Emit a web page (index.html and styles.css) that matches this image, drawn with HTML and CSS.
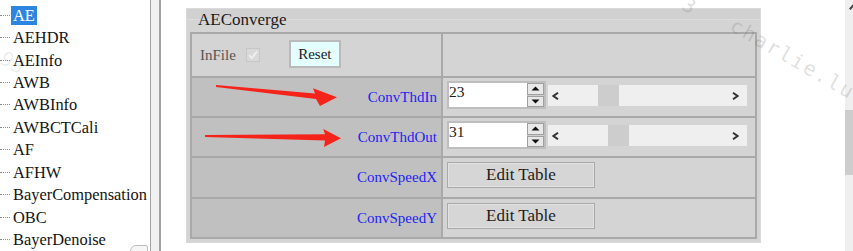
FILE: index.html
```html
<!DOCTYPE html>
<html>
<head>
<meta charset="utf-8">
<link rel="stylesheet" href="styles.css">
</head>
<body>
<div class="app">
  <aside class="tree">
    <ul class="tree-list">
      <li class="node"><span class="conn"></span><span class="label sel">AE</span></li>
      <li class="node"><span class="conn"></span><span class="label">AEHDR</span></li>
      <li class="node"><span class="conn"></span><span class="label">AEInfo</span></li>
      <li class="node"><span class="conn"></span><span class="label">AWB</span></li>
      <li class="node"><span class="conn"></span><span class="label">AWBInfo</span></li>
      <li class="node"><span class="conn"></span><span class="label">AWBCTCali</span></li>
      <li class="node"><span class="conn"></span><span class="label">AF</span></li>
      <li class="node"><span class="conn"></span><span class="label">AFHW</span></li>
      <li class="node"><span class="conn"></span><span class="label">BayerCompensation</span></li>
      <li class="node"><span class="conn"></span><span class="label">OBC</span></li>
      <li class="node"><span class="conn"></span><span class="label">BayerDenoise</span></li>
    </ul>
    <div class="hscroll-stub"></div>
  </aside>
  <div class="splitter"></div>
  <main class="content">
    <section class="group">
      <div class="group-title">AEConverge</div>
      <div class="grid">
        <div class="cell head-left">
          <span class="infile">InFile</span>
          <svg class="check" width="14" height="14" viewBox="0 0 14 14"><rect x="0.5" y="0.5" width="13" height="13" fill="#d9d9d9" stroke="#c6c6c6"/><path d="M3 7.2 L5.8 10 L11 3.5" fill="none" stroke="#f2f2f2" stroke-width="1.6"/></svg>
          <button class="reset-btn">Reset</button>
        </div>
        <div class="cell head-right"></div>

        <div class="cell lbl">ConvThdIn</div>
        <div class="cell ctl">
          <div class="spin">
            <span class="spin-value">23</span>
            <span class="spin-btns">
              <span class="spin-btn"><svg width="9" height="5" viewBox="0 0 9 5"><path d="M0.5 4.5 L4.5 0.5 L8.5 4.5Z" fill="#111"/></svg></span>
              <span class="spin-btn"><svg width="9" height="5" viewBox="0 0 9 5"><path d="M0.5 0.5 L4.5 4.5 L8.5 0.5Z" fill="#111"/></svg></span>
            </span>
          </div>
          <div class="slider">
            <span class="sl-arrow sl-left"><svg width="7" height="8" viewBox="0 0 7 8"><path d="M6 0.8 L1.5 4 L6 7.2" fill="none" stroke="#333" stroke-width="2"/></svg></span>
            <span class="track"><span class="thumb" style="margin-left:34px"></span></span>
            <span class="sl-arrow sl-right"><svg width="7" height="8" viewBox="0 0 7 8"><path d="M1 0.8 L5.5 4 L1 7.2" fill="none" stroke="#333" stroke-width="2"/></svg></span>
          </div>
        </div>

        <div class="cell lbl">ConvThdOut</div>
        <div class="cell ctl">
          <div class="spin">
            <span class="spin-value">31</span>
            <span class="spin-btns">
              <span class="spin-btn"><svg width="9" height="5" viewBox="0 0 9 5"><path d="M0.5 4.5 L4.5 0.5 L8.5 4.5Z" fill="#111"/></svg></span>
              <span class="spin-btn"><svg width="9" height="5" viewBox="0 0 9 5"><path d="M0.5 0.5 L4.5 4.5 L8.5 0.5Z" fill="#111"/></svg></span>
            </span>
          </div>
          <div class="slider">
            <span class="sl-arrow sl-left"><svg width="7" height="8" viewBox="0 0 7 8"><path d="M6 0.8 L1.5 4 L6 7.2" fill="none" stroke="#333" stroke-width="2"/></svg></span>
            <span class="track"><span class="thumb" style="margin-left:44px"></span></span>
            <span class="sl-arrow sl-right"><svg width="7" height="8" viewBox="0 0 7 8"><path d="M1 0.8 L5.5 4 L1 7.2" fill="none" stroke="#333" stroke-width="2"/></svg></span>
          </div>
        </div>

        <div class="cell lbl">ConvSpeedX</div>
        <div class="cell ctl"><button class="edit-btn">Edit Table</button></div>

        <div class="cell lbl">ConvSpeedY</div>
        <div class="cell ctl"><button class="edit-btn">Edit Table</button></div>
      </div>
    </section>
  </main>
  <div class="vscroll">
    <div class="vscroll-inner">
      <span class="vs-up"><svg width="9" height="6" viewBox="0 0 9 6"><path d="M0.8 5.2 L4.5 1.2 L8.2 5.2" fill="none" stroke="#444" stroke-width="2"/></svg></span>
      <span class="vs-thumb"></span>
    </div>
  </div>
</div>

<svg class="arrows" width="853" height="251" viewBox="0 0 853 251">
  <polygon points="216,85 315,93.5 313,88.3 337,97.3 320,106 316,99 216,87" fill="#f5241a"/>
  <polygon points="205,135 325,134.3 323.3,129 341,138.3 324,147 325,140.5 205,137" fill="#f5241a"/>
</svg>
<div class="watermark wm-main">charlie.lu</div>
<div class="watermark wm-top">3</div>
<div class="watermark wm-left">93</div>
</body>
</html>
```
FILE: styles.css
```css
html, body {
  margin: 0;
  padding: 0;
}
body {
  width: 853px;
  height: 251px;
  overflow: hidden;
  background: #fff;
  font-family: "Liberation Serif", "Times New Roman", serif;
  position: relative;
}
.app {
  display: flex;
  height: 251px;
}

/* ---------- tree ---------- */
.tree {
  width: 150px;
  flex: none;
  position: relative;
  padding-top: 4px;
  box-sizing: border-box;
}
.tree-list {
  list-style: none;
  margin: 0;
  padding: 0;
}
.node {
  display: flex;
  align-items: center;
  height: 22.45px;
  font-size: 16.4px;
  color: #141414;
  white-space: nowrap;
}
.conn {
  width: 10px;
  border-top: 1px dotted #8a8a8a;
  margin-right: 1px;
  flex: none;
}
.label {
  padding: 0 2px;
  line-height: 19px;
}
.label.sel {
  background: #2c85de;
  color: #fff;
}
.hscroll-stub {
  position: absolute;
  left: 130px;
  top: 245px;
  width: 16px;
  height: 10px;
  border: 1px solid #bdbdbd;
  border-radius: 6px 2px 0 0;
  background: #f6f6f6;
}

/* ---------- splitter ---------- */
.splitter {
  width: 8px;
  flex: none;
  border-left: 1px solid #a3a3a3;
  border-right: 2px solid #a3a3a3;
  background: #f1f1f1;
}

/* ---------- content ---------- */
.content {
  flex: 1;
  padding: 8px 0 0 25px;
}
.group {
  width: 575px;
  height: 235px;
  box-sizing: border-box;
  border: 1px solid #dadada;
  background: linear-gradient(#d1d1d1 0 10px, #dcdcdc 10px 11px, #d4d4d4 11px);
  padding: 0 3px 3px;
  display: flex;
  flex-direction: column;
}
.group-title {
  height: 23px;
  line-height: 21px;
  font-size: 17px;
  color: #1a1a1a;
  padding-left: 8px;
}
.grid {
  display: grid;
  grid-template-columns: 249px 312px;
  grid-template-rows: 42px 38px 38px 39px 38px;
  gap: 2px;
  padding: 2px;
  background: #a9a9a9;
  width: 567px;
  box-sizing: border-box;
}
.cell {
  background: #d4d4d4;
}
.head-left {
  display: flex;
  align-items: center;
  padding-left: 8px;
}
.infile {
  font-size: 15px;
  color: #555;
  margin-right: 10px;
}
.check {
  display: block;
  margin-top: -1px;
}
.reset-btn {
  margin-left: 29px;
  margin-top: -2px;
  width: 52px;
  height: 28px;
  box-sizing: border-box;
  border: 2px solid #bababa;
  background: #e4fefe;
  font-family: "Liberation Serif", "Times New Roman", serif;
  font-size: 15px;
  color: #1c1c1c;
  padding: 0;
}
.lbl {
  background: #c0c0c0;
  display: flex;
  align-items: center;
  justify-content: flex-end;
  padding-right: 4px;
  font-size: 15px;
  color: #2323f5;
}
.ctl {
  display: flex;
  align-items: flex-start;
  padding: 3px 0 0 4px;
}

/* spin box */
.spin {
  display: flex;
  width: 99px;
  height: 28px;
  box-sizing: border-box;
  border: 2px solid #bebebe;
  background: #fff;
}
.spin-value {
  flex: 1;
  font-size: 15.5px;
  line-height: 18px;
  color: #1a1a1a;
}
.spin-btns {
  width: 17px;
  display: flex;
  flex-direction: column;
  gap: 1px;
  background: #cfcfcf;
}
.spin-btn {
  flex: 1;
  display: flex;
  align-items: center;
  justify-content: center;
  border: 1px solid #9f9f9f;
  background: #e8e8e8;
}
.spin-btn svg {
  display: block;
}

/* slider */
.slider {
  display: flex;
  width: 199px;
  height: 21px;
  margin: 4px 0 0 2px;
  background: #efefef;
}
.sl-arrow {
  width: 16px;
  display: flex;
  align-items: center;
  flex: none;
  box-sizing: border-box;
}
.sl-left {
  padding-left: 4px;
}
.sl-right {
  padding-left: 1px;
}
.sl-arrow svg {
  display: block;
}
.track {
  flex: 1;
  display: flex;
  background: #efefef;
}
.thumb {
  flex: none;
  width: 21px;
  height: 21px;
  background: #cdcdcd;
}

/* edit buttons */
.ctl .edit-btn {
  width: 148px;
  height: 26px;
  box-sizing: border-box;
  border: 1px solid #a9a9a9;
  box-shadow: inset 0 0 0 1px #e2e2e2;
  background: #d6d6d6;
  font-family: "Liberation Serif", "Times New Roman", serif;
  font-size: 17px;
  color: #1c1c1c;
  padding: 0;
  margin-top: 1px;
}

/* right scrollbar */
.vscroll {
  width: 8px;
  flex: none;
  overflow: hidden;
  background: #efefef;
}
.vscroll-inner {
  width: 17px;
  height: 100%;
  display: flex;
  flex-direction: column;
}
.vs-up {
  height: 17px;
  display: flex;
  align-items: flex-start;
  justify-content: center;
  padding-top: 4px;
  box-sizing: border-box;
}
.vs-thumb {
  margin-top: 93px;
  height: 65px;
  background: #cdcdcd;
}

/* overlays */
.arrows {
  position: absolute;
  left: 0;
  top: 0;
  pointer-events: none;
}
.watermark {
  position: absolute;
  font-family: "DejaVu Sans Mono", monospace;
  font-size: 20px;
  color: rgba(110, 110, 110, 0.22);
  transform-origin: left top;
  pointer-events: none;
  white-space: nowrap;
}
.wm-main {
  left: 738px;
  top: 13px;
  letter-spacing: 2px;
  transform: rotate(30deg);
}
.wm-top {
  left: 690px;
  top: -8px;
  transform: rotate(30deg);
}
.wm-left {
  left: 8px;
  top: 46px;
  transform: rotate(30deg);
  color: rgba(110, 110, 110, 0.12);
}
```
